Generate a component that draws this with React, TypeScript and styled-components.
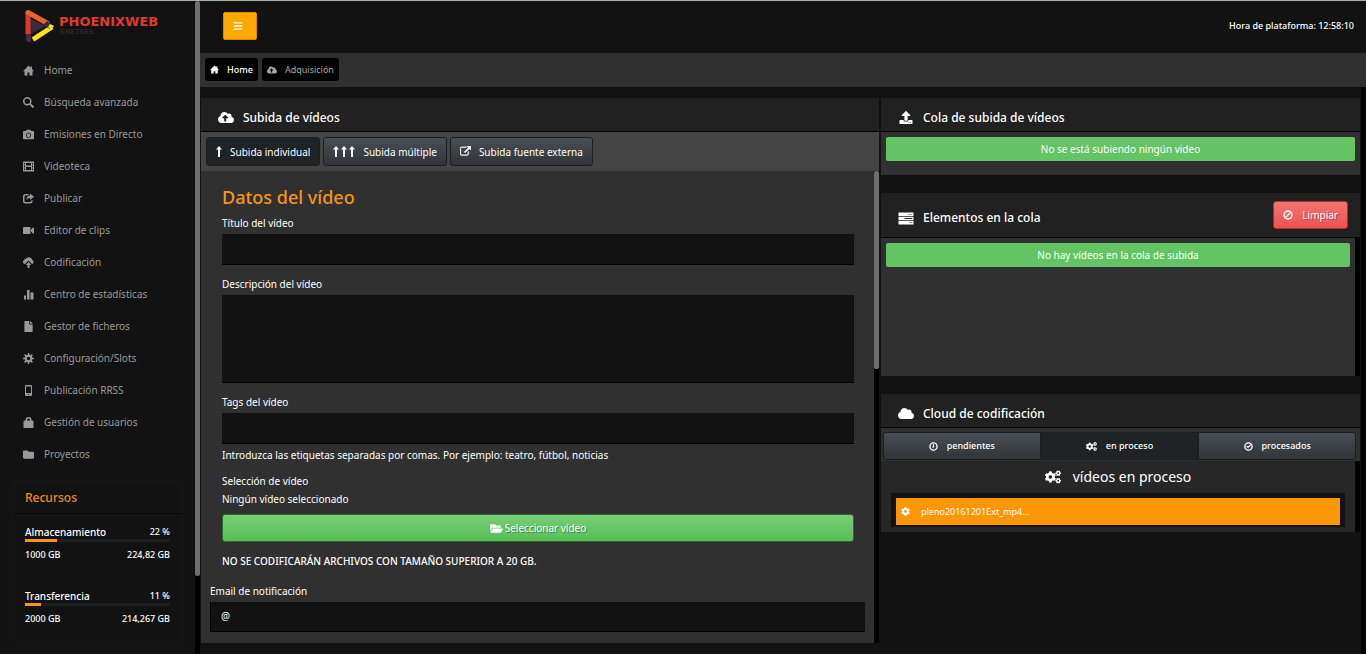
import React from 'react';
import styled, { createGlobalStyle, css } from 'styled-components';
import {
  FaBars,
  FaCamera,
  FaCloud,
  FaCloudUploadAlt,
  FaCog,
  FaCogs,
  FaFile,
  FaFolder,
  FaFolderOpen,
  FaUpload,
} from 'react-icons/fa';

const GlobalStyle = createGlobalStyle`
  *, *::before, *::after { box-sizing: border-box; }
  body {
    margin: 0;
    background: #121212;
    color: #fff;
    font-family: 'Noto Sans', 'Open Sans', sans-serif;
    font-size: 10px;
    line-height: 18px;
  }
  h1, h2, h3, p, ul, ol { margin: 0; padding: 0; font-weight: 500; }
  ul, ol { list-style: none; }
  button, input, textarea { font: inherit; color: inherit; }
`;

/* ---------- icons ---------- */

const Glyph = styled.svg<{ $size?: number }>`
  width: ${(p) => p.$size ?? 11}px;
  height: ${(p) => p.$size ?? 11}px;
  fill: currentColor;
  flex: none;
`;

const HomeIcon = ({ size }: { size?: number }) => (
  <Glyph viewBox="0 0 22 22" $size={size}>
    <path d="M11 1l4.500 4.500V3H18v5l4 4.500h-3V21h-6v-6H9v6H3v-8.500H0z" />
  </Glyph>
);
const SearchIcon = () => (
  <Glyph viewBox="0 0 22 22">
    <path fillRule="evenodd" d="M8.500 0a8.500 8.500 0 1 0 4.700 15.600l5 5.500a2 2 0 0 0 3-3l-5.500-5A8.500 8.500 0 0 0 8.500 0zm0 3a5.500 5.500 0 1 1 0 11 5.500 5.500 0 0 1 0-11z" />
  </Glyph>
);
const FilmIcon = () => (
  <Glyph viewBox="0 0 22 22">
    <path fillRule="evenodd" d="M0 1h22v20H0zM2 4v3h2V4zm0 5v4h2V9zm0 6v3h2v-3zM6 4v5h10V4zm0 8v6h10v-6zM18 4v3h2V4zm0 5v4h2V9zm0 6v3h2v-3z" />
  </Glyph>
);
const ShareIcon = () => (
  <Glyph viewBox="0 0 22 22">
    <path d="M12 2H5a5 5 0 0 0-5 5v9a5 5 0 0 0 5 5h9a5 5 0 0 0 5-5v-2.500L16 16a2 2 0 0 1-2 2H5a2 2 0 0 1-2-2V7a2 2 0 0 1 2-2h4z" />
    <path d="M14 1l8 6.500-8 6.500v-4c-3 0-5 1-7 4.500C7 9 9.500 5 14 5z" />
  </Glyph>
);
const VideoIcon = () => (
  <Glyph viewBox="0 0 22 22">
    <path d="M2 4h11a2 2 0 0 1 2 2v10a2 2 0 0 1-2 2H2a2 2 0 0 1-2-2V6a2 2 0 0 1 2-2zM16 9l4-4h2v12h-2l-4-4z" />
  </Glyph>
);
const CloudUpIcon = () => (
  <Glyph viewBox="0 0 22 22">
    <path d="M3.500 14A4 4 0 0 1 2 6.500 4.500 4.500 0 0 1 7 3a6.500 6.500 0 0 1 11.500 3A4.500 4.500 0 0 1 19 14h-1l-7-7-7 7z" />
    <path d="M11 10l5.500 6H13v6H9v-6H5.500z" />
  </Glyph>
);
const StatsIcon = () => (
  <Glyph viewBox="0 0 22 22">
    <path d="M2 13h4v8H2zM8 2h5v19H8zM15 7h6v14h-6z" />
  </Glyph>
);
const GearIcon = () => (
  <Glyph viewBox="0 0 22 22">
    <circle cx="11" cy="11" r="5.500" fill="none" stroke="currentColor" strokeWidth="4" />
    <path
      d="M11 0v5M11 17v5M0 11h5M17 11h5M3.200 3.200l3.600 3.600M15.200 15.200l3.600 3.600M3.200 18.800l3.600-3.600M15.200 6.800l3.600-3.600"
      stroke="currentColor"
      strokeWidth="3"
    />
  </Glyph>
);
const PhoneIcon = () => (
  <Glyph viewBox="0 0 22 22">
    <path fillRule="evenodd" d="M6 0h10a2 2 0 0 1 2 2v18a2 2 0 0 1-2 2H6a2 2 0 0 1-2-2V2a2 2 0 0 1 2-2zm0 3v13h10V3zm4 15v2h2v-2z" />
  </Glyph>
);
const LockIcon = () => (
  <Glyph viewBox="0 0 22 22">
    <path fillRule="evenodd" d="M5 7V6a6 6 0 0 1 12 0v1h2a2 2 0 0 1 2 2v13H1V9a2 2 0 0 1 2-2zm3 0h6V6a3 3 0 0 0-6 0z" />
  </Glyph>
);
const RoundIcon = ({ d, size = 10 }: { d: string; size?: number }) => (
  <Glyph viewBox="0 0 20 20" $size={size}>
    <circle cx="10" cy="10" r="8" fill="none" stroke="currentColor" strokeWidth="3" />
    <path d={d} fill="none" stroke="currentColor" strokeWidth="2.500" />
  </Glyph>
);
const TasksIcon = () => (
  <Glyph viewBox="0 0 28 28" $size={15}>
    <path fillRule="evenodd" d="M0 3h28v7H0zM18 6v1h8V6zM0 11h28v6H0zM11 13v2h15v-2zM0 18h28v7H0zM20 21v1h6v-1z" />
  </Glyph>
);
const ExternalIcon = () => (
  <Glyph viewBox="0 0 1792 1792" $size={11}>
    <path d="M1408 928v320q0 119-84.500 203.500t-203.500 84.500h-832q-119 0-203.500-84.500t-84.500-203.500v-832q0-119 84.500-203.500t203.500-84.500h704q14 0 23 9t9 23v64q0 14-9 23t-23 9h-704q-66 0-113 47t-47 113v832q0 66 47 113t113 47h832q66 0 113-47t47-113v-320q0-14 9-23t23-9h64q14 0 23 9t9 23zm384-864v512q0 26-19 45t-45 19-45-19l-176-176-652 652q-10 10-23 10t-23-10l-114-114q-10-10-10-23t10-23l652-652-176-176q-19-19-19-45t19-45 45-19h512q26 0 45 19t19 45z" stroke="currentColor" strokeWidth="60" />
  </Glyph>
);
const ArrowSvg = styled.svg`
  width: 6px;
  height: 11px;
  fill: currentColor;
`;
const ArrowUp = () => (
  <ArrowSvg viewBox="0 0 6 11">
    <path d="M3 0L6 3.600H4V11H2V3.600H0z" />
  </ArrowSvg>
);

/* ---------- shell ---------- */

const Shell = styled.div`
  display: flex;
  height: 100vh;
  min-height: 640px;
  border-top: 1px solid #a9afac;
  overflow: hidden;
`;

const Sidebar = styled.aside`
  display: flex;
  flex: none;
  width: 200px;
`;

const SidebarContent = styled.div`
  flex: 1;
  padding: 9px 12px 0;
`;

const ScrollTrack = styled.div`
  flex: none;
  width: 5px;
  background: #000;
`;
const ScrollThumb = styled.div<{ $share: number }>`
  height: ${(p) => p.$share}%;
  border-radius: 2px;
  background: #6e6e6e;
`;

const Logo = styled.a`
  display: flex;
  gap: 4px;
  height: 34px;
  margin-left: 12px;
  text-decoration: none;
`;
const LogoMark = styled.svg`
  width: 31px;
  height: 33px;
`;
const LogoText = styled.span`
  display: flex;
  flex-direction: column;
  padding-top: 5px;
  color: #df3b2f;
  font: bold 13px/14px 'DejaVu Sans', sans-serif;
`;
const LogoSub = styled.span`
  color: #3d2f40;
  font-size: 7px;
  font-weight: 400;
  line-height: 7px;
`;

const Nav = styled.nav`
  margin-top: 10px;
`;
const NavLink = styled.a`
  display: flex;
  align-items: center;
  gap: 10px;
  height: 32px;
  padding-left: 11px;
  color: #999;
  text-decoration: none;
  svg {
    width: 11px;
    height: 11px;
  }
`;

const Resources = styled.section`
  margin-top: 11px;
  border: 1px solid #151515;
`;
const ResourcesTitle = styled.h2`
  padding: 6px 12px 5px;
  border-bottom: 1px solid #070707;
  color: #f78a1d;
  font-size: 12px;
  line-height: 20px;
`;
const Resource = styled.div`
  padding: 9px 12px 14px;
  font-weight: 500;
`;
const ResourceRow = styled.div`
  display: flex;
  justify-content: space-between;
  font-size: 9px;
`;
const ResourceName = styled.span`
  font-size: 10px;
`;
const Meter = styled.div`
  height: 3px;
  margin: -2px 0 4px;
  background: #1d1f21;
`;
const MeterFill = styled.div<{ $value: number }>`
  width: ${(p) => p.$value}%;
  height: 100%;
  background: #f7941d;
`;

const Main = styled.div`
  display: flex;
  flex: 1;
  flex-direction: column;
  min-width: 0;
`;
const TopBar = styled.header`
  display: flex;
  align-items: center;
  justify-content: space-between;
  height: 52px;
  padding: 0 12px 2px 23px;
`;
const MenuButton = styled.button`
  display: flex;
  align-items: center;
  justify-content: center;
  width: 34px;
  height: 28px;
  padding: 0 5px 0 0;
  border: 1px solid #d98c00;
  border-radius: 2px;
  background: #ffa800;
  font-size: 10px;
`;
const Clock = styled.span`
  font-size: 9px;
  font-weight: 500;
`;
const Crumbs = styled.ol`
  display: flex;
  gap: 4px;
  height: 34px;
  padding: 5px;
  background: #303030;
`;
const Crumb = styled.a<{ $muted?: boolean }>`
  display: flex;
  align-items: center;
  gap: 8px;
  height: 23px;
  padding: 0 5px;
  border-radius: 3px;
  background: #000;
  color: ${(p) => (p.$muted ? '#aaa' : '#fff')};
  font-size: 9px;
  font-weight: ${(p) => (p.$muted ? 400 : 500)};
  text-decoration: none;
`;

const Workspace = styled.div`
  display: flex;
  flex: 1;
  min-height: 0;
`;
const Columns = styled.main`
  display: grid;
  flex: 1;
  grid-template-columns: 678fr 479fr;
  gap: 2px;
  align-items: start;
  min-width: 0;
  padding: 11px 1px 0;
`;

/* ---------- panels ---------- */

const Panel = styled.section`
  min-width: 0;
`;
const PanelHead = styled.header<{ $tall?: boolean }>`
  display: flex;
  align-items: center;
  justify-content: space-between;
  height: ${(p) => (p.$tall ? 45 : 34)}px;
  padding: 6px 12px 0 17px;
  border-bottom: 1px solid #060606;
  background: #212121;
`;
const PanelTitle = styled.h2`
  display: flex;
  align-items: center;
  gap: 9px;
  font-size: 12px;
  svg {
    width: 16px;
  }
`;
const PanelBody = styled.div<{ $min?: number; $dark?: boolean }>`
  flex: 1;
  min-width: 0;
  min-height: ${(p) => p.$min ?? 0}px;
  padding: 5px;
  background: ${(p) => (p.$dark ? '#272727' : '#303030')};
`;
const ScrollRow = styled.div`
  display: flex;
`;
const Side = styled.div`
  display: flex;
  flex-direction: column;
  gap: 18px;
  min-width: 0;
`;
const Notice = styled.p`
  height: 24px;
  border-radius: 2px;
  background: #62c462;
  font-weight: 400;
  line-height: 25px;
  text-align: center;
`;

const raised = css`
  border: 1px solid #1b1d20;
  background: linear-gradient(#484e55, #313539);
`;
const pressed = css`
  border: 1px solid #1c1f22;
  background: #202326;
`;

const TabBar = styled.div`
  display: flex;
  gap: 3px;
  height: 39px;
  padding: 5px;
  background: #444;
`;
const Tab = styled.button<{ $active?: boolean }>`
  display: flex;
  align-items: center;
  gap: 8px;
  height: 29px;
  padding: 0 9px;
  border-radius: 3px;
  font-weight: 400;
  white-space: nowrap;
  ${(p) => (p.$active ? pressed : raised)}
`;
const Arrows = styled.span`
  display: flex;
  gap: 2px;
`;

const Form = styled.form`
  flex: 1;
  min-width: 0;
  padding: 12px 9px 1px;
  background: #303030;
`;
const FormInner = styled.div`
  padding: 0 11px 0 12px;
`;
const FormTitle = styled.h3`
  margin-bottom: 3px;
  color: #f7941d;
  font-size: 18px;
  line-height: 28px;
`;
const Field = styled.div`
  display: flex;
  flex-direction: column;
  gap: 2px;
  margin-bottom: 10px;
`;
const TagField = styled(Field)`
  margin-bottom: 8px;
`;
const FieldLabel = styled.label`
  height: 18px;
  font-weight: 400;
`;
const fieldBox = css`
  width: 100%;
  padding: 4px 10px;
  border: 0;
  border-bottom: 1px solid #000;
  border-radius: 0;
  outline: none;
  background: #121212;
`;
const TextInput = styled.input`
  ${fieldBox}
  height: 31px;
`;
const TextArea = styled.textarea`
  ${fieldBox}
  display: block;
  height: 88px;
  resize: none;
`;
const Hint = styled.p`
  font-weight: 400;
`;
const Selection = styled.div`
  margin-bottom: 6px;
`;
const PickButton = styled.button`
  display: flex;
  align-items: center;
  justify-content: center;
  gap: 2px;
  width: 100%;
  height: 28px;
  border: 1px solid #2c6b2c;
  border-radius: 3px;
  background: linear-gradient(#7bcc78, #55bf55);
  text-shadow: 1px 1px 0 #3f8f3f;
  svg {
    width: 13px;
    height: 13px;
  }
`;
const Warning = styled.p`
  margin: 10px 0 12px;
  font-weight: 500;
`;
const EmailGroup = styled.div`
  display: flex;
  height: 30px;
  border-left: 1px solid #000;
`;
const At = styled.span`
  width: 31px;
  padding: 5px 10px;
  border-bottom: 1px solid #000;
  background: #121212;
  font-size: 10px;
`;
const EmailInput = styled.input`
  ${fieldBox}
  flex: 1;
  height: 30px;
`;

const ClearButton = styled.button`
  display: flex;
  align-items: center;
  gap: 9px;
  height: 28px;
  margin-top: -6px;
  padding: 0 9px;
  border: 1px solid #9c3634;
  border-radius: 3px;
  background: linear-gradient(#f07571, #ee5151);
  text-shadow: 1px 1px 0 #b54542;
`;

const Segments = styled.div`
  display: grid;
  grid-template-columns: repeat(3, 1fr);
  height: 33px;
  padding: 4px 4px 1px 2px;
  background: #303030;
`;
const Segment = styled.button<{ $active?: boolean }>`
  display: flex;
  align-items: center;
  justify-content: center;
  gap: 9px;
  font-size: 9px;
  font-weight: 500;
  ${(p) => (p.$active ? pressed : raised)}
  &:first-child {
    border-radius: 3px 0 0 3px;
  }
  &:last-child {
    border-radius: 0 3px 3px 0;
  }
`;
const QueueTitle = styled.h3`
  display: flex;
  align-items: center;
  justify-content: center;
  gap: 12px;
  height: 22px;
  margin-bottom: 5px;
  font-size: 14px;
  font-weight: 400;
`;
const JobFrame = styled.div`
  margin: 0 5px;
  padding: 5px 5px 2px;
  background: #121212;
`;
const Job = styled.div`
  display: flex;
  align-items: center;
  gap: 11px;
  height: 27px;
  padding: 0 5px;
  background: #fb9706;
  font-size: 9px;
`;

/* ---------- content ---------- */

const navItems: [React.ReactNode, string][] = [
  [<HomeIcon />, 'Home'],
  [<SearchIcon />, 'Búsqueda avanzada'],
  [<FaCamera />, 'Emisiones en Directo'],
  [<FilmIcon />, 'Videoteca'],
  [<ShareIcon />, 'Publicar'],
  [<VideoIcon />, 'Editor de clips'],
  [<CloudUpIcon />, 'Codificación'],
  [<StatsIcon />, 'Centro de estadísticas'],
  [<FaFile />, 'Gestor de ficheros'],
  [<GearIcon />, 'Configuración/Slots'],
  [<PhoneIcon />, 'Publicación RRSS'],
  [<LockIcon />, 'Gestión de usuarios'],
  [<FaFolder />, 'Proyectos'],
];

const resources = [
  { name: 'Almacenamiento', value: 22, total: '1000 GB', used: '224,82 GB' },
  { name: 'Transferencia', value: 11, total: '2000 GB', used: '214,267 GB' },
];

export default function App() {
  return (
    <>
      <GlobalStyle />
      <Shell>
        <Sidebar>
          <SidebarContent>
            <Logo href="#">
              <LogoMark viewBox="0 0 31 33">
                <path d="M6 8v17l15-9z" fill="#3a2a40" />
                <path d="M4 2v22" stroke="#dc3a2c" strokeWidth="5" />
                <path d="M2 24h5v8H4l-2-2z" fill="#4a2b45" />
                <path d="M4 2.500L23 13" stroke="#e8642a" strokeWidth="5" strokeLinecap="round" />
                <path d="M9 29.500L28 17" stroke="#fbe122" strokeWidth="5" />
                <path d="M23 11l7 5-4 3-7-4z" fill="#3a2a40" />
                <path d="M26 14l4 2-3 4-3-3z" fill="#fbe122" />
              </LogoMark>
              <LogoText>
                PHOENIXWEB
                <LogoSub>IENETRES</LogoSub>
              </LogoText>
            </Logo>
            <Nav>
              {navItems.map(([icon, label]) => (
                <NavLink href="#" key={label}>
                  {icon}
                  {label}
                </NavLink>
              ))}
            </Nav>
            <Resources>
              <ResourcesTitle>Recursos</ResourcesTitle>
              {resources.map((r) => (
                <Resource key={r.name}>
                  <ResourceRow>
                    <ResourceName>{r.name}</ResourceName>
                    <span>{r.value} %</span>
                  </ResourceRow>
                  <Meter>
                    <MeterFill $value={r.value} />
                  </Meter>
                  <ResourceRow>
                    <span>{r.total}</span>
                    <span>{r.used}</span>
                  </ResourceRow>
                </Resource>
              ))}
            </Resources>
          </SidebarContent>
          <ScrollTrack>
            <ScrollThumb $share={88} />
          </ScrollTrack>
        </Sidebar>

        <Main>
          <TopBar>
            <MenuButton type="button" aria-label="Menú">
              <FaBars />
            </MenuButton>
            <Clock>Hora de plataforma: 12:58:10</Clock>
          </TopBar>
          <Crumbs>
            <li>
              <Crumb href="#">
                <HomeIcon size={9} />
                Home
              </Crumb>
            </li>
            <li>
              <Crumb href="#" $muted>
                <FaCloudUploadAlt size={10} />
                Adquisición
              </Crumb>
            </li>
          </Crumbs>

          <Workspace>
            <Columns>
              <Panel>
                <PanelHead>
                  <PanelTitle>
                    <FaCloudUploadAlt size={15} />
                    Subida de vídeos
                  </PanelTitle>
                </PanelHead>
                <TabBar>
                  <Tab type="button" $active>
                    <ArrowUp />
                    Subida individual
                  </Tab>
                  <Tab type="button">
                    <Arrows>
                      <ArrowUp />
                      <ArrowUp />
                      <ArrowUp />
                    </Arrows>
                    Subida múltiple
                  </Tab>
                  <Tab type="button">
                    <ExternalIcon />
                    Subida fuente externa
                  </Tab>
                </TabBar>
                <ScrollRow>
                  <Form>
                    <FormInner>
                      <FormTitle>Datos del vídeo</FormTitle>
                      <Field>
                        <FieldLabel htmlFor="titulo">Título del vídeo</FieldLabel>
                        <TextInput id="titulo" type="text" />
                      </Field>
                      <Field>
                        <FieldLabel htmlFor="descripcion">Descripción del vídeo</FieldLabel>
                        <TextArea id="descripcion" />
                      </Field>
                      <TagField>
                        <FieldLabel htmlFor="tags">Tags del vídeo</FieldLabel>
                        <TextInput id="tags" type="text" />
                        <Hint>
                          Introduzca las etiquetas separadas por comas. Por ejemplo: teatro, fútbol, noticias
                        </Hint>
                      </TagField>
                      <Selection>
                        <Hint>Selección de vídeo</Hint>
                        <Hint>Ningún vídeo seleccionado</Hint>
                      </Selection>
                      <PickButton type="button">
                        <FaFolderOpen />
                        Seleccionar vídeo
                      </PickButton>
                      <Warning>NO SE CODIFICARÁN ARCHIVOS CON TAMAÑO SUPERIOR A 20 GB.</Warning>
                    </FormInner>
                    <Field>
                      <FieldLabel htmlFor="email">Email de notificación</FieldLabel>
                      <EmailGroup>
                        <At>@</At>
                        <EmailInput id="email" type="email" />
                      </EmailGroup>
                    </Field>
                  </Form>
                  <ScrollTrack>
                    <ScrollThumb $share={42} />
                  </ScrollTrack>
                </ScrollRow>
              </Panel>

              <Side>
                <Panel>
                  <PanelHead>
                    <PanelTitle>
                      <FaUpload size={13} />
                      Cola de subida de vídeos
                    </PanelTitle>
                  </PanelHead>
                  <PanelBody $min={43}>
                    <Notice>No se está subiendo ningún video</Notice>
                  </PanelBody>
                </Panel>

                <Panel>
                  <PanelHead $tall>
                    <PanelTitle>
                      <TasksIcon />
                      Elementos en la cola
                    </PanelTitle>
                    <ClearButton type="button">
                      <RoundIcon d="M5 15L15 5" />
                      Limpiar
                    </ClearButton>
                  </PanelHead>
                  <ScrollRow>
                    <PanelBody $min={138}>
                      <Notice>No hay vídeos en la cola de subida</Notice>
                    </PanelBody>
                    <ScrollTrack />
                  </ScrollRow>
                </Panel>

                <Panel>
                  <PanelHead>
                    <PanelTitle>
                      <FaCloud size={15} />
                      Cloud de codificación
                    </PanelTitle>
                  </PanelHead>
                  <Segments>
                    <Segment type="button">
                      <RoundIcon size={9} d="M10 5v6H7" />
                      pendientes
                    </Segment>
                    <Segment type="button" $active>
                      <FaCogs size={11} />
                      en proceso
                    </Segment>
                    <Segment type="button">
                      <RoundIcon size={9} d="M6 9l3 3 6-6" />
                      procesados
                    </Segment>
                  </Segments>
                  <ScrollRow>
                    <PanelBody $dark>
                      <QueueTitle>
                        <FaCogs size={16} />
                        vídeos en proceso
                      </QueueTitle>
                      <JobFrame>
                        <Job>
                          <FaCog size={9} />
                          pleno20161201Ext_mp4...
                        </Job>
                      </JobFrame>
                    </PanelBody>
                    <ScrollTrack />
                  </ScrollRow>
                </Panel>
              </Side>
            </Columns>
            <ScrollTrack />
          </Workspace>
        </Main>
      </Shell>
    </>
  );
}
